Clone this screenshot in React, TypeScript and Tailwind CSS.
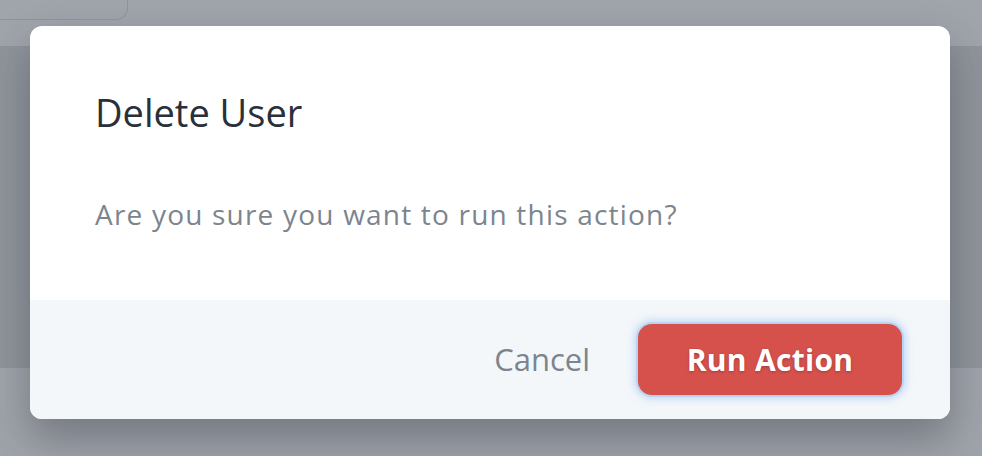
import React from "react";

const font = { fontFamily: "'Open Sans', Lato, sans-serif" };

const App = () => {
  return (
    <div className="relative w-[982px] h-[456px] overflow-hidden" style={font}>
      {/* page behind the overlay */}
      <div className="flex flex-col h-full">
        <div className="h-[46px] bg-[#a0a4ab] shrink-0">
          <div className="w-[128px] h-[20px] border-b border-r border-[#8f949b] rounded-br-[12px]" />
        </div>
        <div className="h-[322px] bg-[#8f949b] shrink-0" />
        <div className="flex-1 bg-[#9fa3aa]" />
      </div>

      {/* dialog */}
      <div className="absolute left-[30px] top-[26px] w-[920px] rounded-[12px] bg-white overflow-hidden shadow-[0_20px_40px_rgba(40,44,52,0.35)]">
        <div className="h-[274px] px-[65px] pt-[64px]">
          <h2 className="text-[38px] leading-[44px] text-[#29303a] font-normal">Delete User</h2>
          <p className="mt-[64px] text-[28px] leading-[32px] tracking-[1.2px] text-[#7c858e]">
            Are you sure you want to run this action?
          </p>
        </div>
        <div className="h-[119px] bg-[#f3f7fa] flex items-center justify-end pr-[48px] gap-[48px]">
          <button className="text-[31px] text-[#7c858e] leading-none">Cancel</button>
          <button className="w-[264px] h-[71px] rounded-[14px] bg-[#d6514c] text-white text-[30px] font-bold tracking-[0.3px] shadow-[0_0_0_2px_rgba(150,190,240,0.35),0_0_8px_3px_rgba(140,180,235,0.55)] [text-shadow:0_1px_3px_rgba(0,0,0,0.25)]">
            Run Action
          </button>
        </div>
      </div>
    </div>
  );
};

export default App;
